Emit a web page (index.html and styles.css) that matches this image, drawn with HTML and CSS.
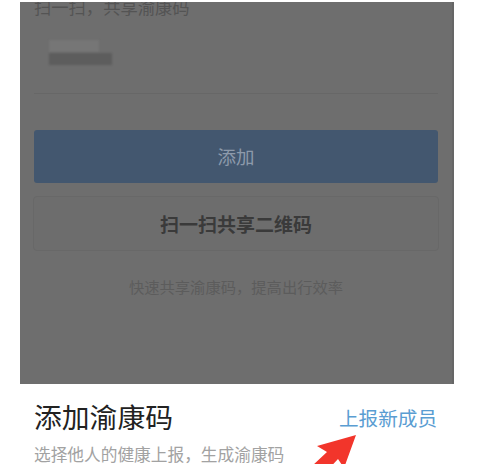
FILE: index.html
```html
<!DOCTYPE html>
<html lang="zh">
<head>
<meta charset="utf-8">
<link rel="stylesheet" href="styles.css">
</head>
<body>
<div class="page">
  <div class="panel">
    <div class="top-hint">扫一扫，共享渝康码</div>
    <div class="field">
      <div class="blur">
        <div class="blur-a"></div>
        <div class="blur-b"></div>
      </div>
    </div>
    <div class="btn-primary">添加</div>
    <div class="btn-outline">扫一扫共享二维码</div>
    <div class="note">快速共享渝康码，提高出行效率</div>
  </div>
  <div class="section">
    <div class="row">
      <div class="title">添加渝康码</div>
      <div class="link">上报新成员</div>
    </div>
    <div class="sub">选择他人的健康上报，生成渝康码</div>
  </div>
  <svg class="arrow" width="500" height="464" viewBox="0 0 500 464">
    <polygon points="356,435 344,468 338,459 324,474 312,466 327,452 317,446" fill="#f2352b"/>
  </svg>
</div>
</body>
</html>
```

FILE: styles.css
```css
html, body {
  margin: 0;
  padding: 0;
  background: #ffffff;
}
body {
  font-family: "Noto Sans CJK SC", "Noto Sans", sans-serif;
  width: 500px;
  height: 464px;
  overflow: hidden;
}
.page {
  position: relative;
  width: 500px;
  height: 464px;
  padding-top: 2px;
  box-sizing: border-box;
}
.panel {
  margin-left: 20px;
  width: 434px;
  height: 382px;
  background: #6e6e6e;
  border-right: 2px solid #666666;
  box-sizing: border-box;
  padding: 0 14px 0 14px;
  overflow: hidden;
}
.top-hint {
  margin-top: -5px;
  height: 20px;
  line-height: 20px;
  font-size: 17.3px;
  color: #545454;
}
.field {
  height: 77px;
  box-sizing: border-box;
  border-bottom: 1px solid #676767;
  padding: 23px 0 0 15px;
}
.blur {
  width: 64px;
  height: 25px;
  filter: blur(1.2px);
}
.blur-a {
  width: 50px;
  height: 12px;
  background: #767676;
}
.blur-b {
  width: 63px;
  height: 12px;
  background: #5d5d5d;
  margin-top: 1px;
}
.btn-primary {
  margin-top: 36px;
  height: 53px;
  border-radius: 3px;
  background: #43576f;
  color: #8d9aab;
  font-size: 18.5px;
  line-height: 53px;
  text-align: center;
}
.btn-outline {
  margin-top: 13px;
  height: 55px;
  box-sizing: border-box;
  border: 1px solid #686868;
  border-radius: 4px;
  background: #6d6d6d;
  color: #3a3a3a;
  font-size: 19px;
  font-weight: bold;
  line-height: 53px;
  text-align: center;
  margin-right: -1px;
  margin-left: -1px;
}
.note {
  margin-top: 25px;
  line-height: 20px;
  font-size: 15.3px;
  color: #5c5c5c;
  text-align: center;
}
.section {
  padding: 0 63px 0 34px;
}
.row {
  margin-top: 16px;
  display: flex;
  justify-content: space-between;
  align-items: center;
  height: 32px;
}
.title {
  font-size: 27.8px;
  line-height: 32px;
  color: #222222;
}
.link {
  font-size: 19.6px;
  line-height: 24px;
  color: #5a9dd2;
  margin-top: 3px;
}
.sub {
  margin-top: 12px;
  font-size: 16.7px;
  line-height: 20px;
  color: #a2a2a2;
}
.arrow {
  position: absolute;
  left: 0;
  top: 0;
}
```
